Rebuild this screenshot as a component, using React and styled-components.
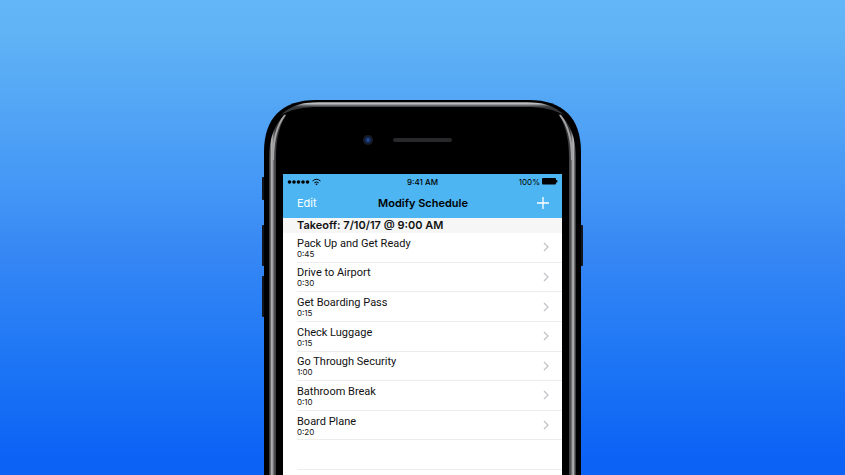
import React from "react";
import styled, { createGlobalStyle } from "styled-components";

const GlobalStyle = createGlobalStyle`
  * { box-sizing: border-box; }
  html { height: 100%; }
  body {
    margin: 0;
    font-family: Inter, "Liberation Sans", sans-serif;
  }
  button { font: inherit; color: inherit; background: none; border: 0; padding: 0; cursor: pointer; }
`;

const Backdrop = styled.main`
  height: 100vh;
  overflow: hidden;
  display: flex;
  justify-content: center;
  align-items: flex-start;
  padding-top: 100px;
  background: linear-gradient(180deg, #63b6f7 0%, #60b3f5 7%, #4194f5 43%, #3a8af4 50%, #2179f5 72%, #0b62f5 97%);
`;

const Phone = styled.section`
  position: relative;
  width: 321px;
  height: 620px;
  padding: 0 21px;
`;

const Shell = styled.svg`
  position: absolute;
  inset: 0;
  width: 100%;
  height: 100%;
`;

const Forehead = styled.div`
  height: 74px;
`;

const Screen = styled.div`
  position: relative;
  min-height: 500px;
  background: #fff;
  color: #111;
`;

const StatusBar = styled.div`
  display: grid;
  grid-template-columns: 1fr auto 1fr;
  align-items: center;
  height: 15px;
  padding: 0 4px;
  background: #4cb5f2;
  color: #000;
  font-size: 8px;
  line-height: 10px;
`;

const Signal = styled.svg`
  width: 34px;
  height: 8px;
`;

const Clock = styled.span`
  font-weight: 500;
`;

const Power = styled.span`
  display: flex;
  justify-content: flex-end;
  align-items: center;
  gap: 1px;
`;

const Battery = styled.svg`
  width: 17px;
  height: 7px;
`;

const NavBar = styled.header`
  display: grid;
  grid-template-columns: 1fr auto 1fr;
  align-items: center;
  height: 29px;
  padding: 0 13px 1px 14px;
  background: #4cb5f2;
`;

const EditButton = styled.button`
  justify-self: start;
  color: #fff;
  font-size: 11px;
  line-height: 16px;
`;

const Title = styled.h1`
  margin: 0;
  color: #000;
  font-size: 11px;
  font-weight: 600;
  line-height: 16px;
`;

const AddButton = styled.button`
  justify-self: end;
  display: flex;
  color: #fff;
`;

const SectionTitle = styled.h2`
  margin: 0;
  padding: 0 14px;
  background: #f6f6f6;
  color: #111;
  font-size: 11px;
  font-weight: 600;
  line-height: 15px;
`;

const Steps = styled.ul`
  display: grid;
  grid-auto-rows: 1fr;
  height: 237px;
  margin: 0;
  padding: 0 0 0 14px;
  list-style: none;
`;

const Step = styled.li`
  display: flex;
  border-bottom: 1px solid #ededee;
`;

const StepButton = styled.button`
  flex: 1;
  display: flex;
  align-items: center;
  justify-content: space-between;
  padding-right: 13px;
  text-align: left;
`;

const StepText = styled.span`
  display: flex;
  flex-direction: column;
`;

const StepName = styled.span`
  font-family: Roboto, "Liberation Sans", sans-serif;
  font-size: 11px;
  line-height: 13px;
`;

const StepTime = styled.span`
  font-size: 8px;
  line-height: 8px;
`;

const steps = [
  ["Pack Up and Get Ready", "0:45"],
  ["Drive to Airport", "0:30"],
  ["Get Boarding Pass", "0:15"],
  ["Check Luggage", "0:15"],
  ["Go Through Security", "1:00"],
  ["Bathroom Break", "0:10"],
  ["Board Plane", "0:20"],
];

function PhoneShell() {
  return (
    <Shell viewBox="0 0 321 620" aria-hidden="true">
      <defs>
        <linearGradient id="side" x1="6" x2="14" y1="0" y2="0" gradientUnits="userSpaceOnUse">
          <stop offset="0" stopColor="#1c1c1e" />
          <stop offset=".25" stopColor="#48484a" />
          <stop offset=".45" stopColor="#b4b4b6" />
          <stop offset=".6" stopColor="#9a9a9c" />
          <stop offset=".75" stopColor="#555557" />
          <stop offset="1" stopColor="#3a3a3c" />
        </linearGradient>
        <linearGradient id="top" x1="0" x2="0" y1="2" y2="7" gradientUnits="userSpaceOnUse">
          <stop offset="0" stopColor="#77787b" />
          <stop offset=".35" stopColor="#c6c7ca" />
          <stop offset=".6" stopColor="#77787b" />
          <stop offset="1" stopColor="#37383b" />
        </linearGradient>
        <radialGradient id="lens">
          <stop offset="0" stopColor="#2f5cae" />
          <stop offset=".4" stopColor="#15306b" />
          <stop offset=".7" stopColor="#111a30" />
          <stop offset="1" stopColor="#1d1d20" />
        </radialGradient>
        <g id="rim">
          <path d="M7 620V58C7 38 13 22 25 13C18 24 14 38 14 58V620Z" fill="url(#side)" />
          <path d="M11 60C11 40 15 25 23 15" fill="none" stroke="#a4a4a6" strokeWidth="2" />
        </g>
      </defs>
      <g fill="#11151d">
        <rect x="0" y="77" width="4" height="23" rx="1" />
        <rect x="0" y="125" width="4" height="41" rx="1" />
        <rect x="0" y="176" width="4" height="41" rx="1" />
        <rect x="317" y="125" width="4" height="41" rx="1" />
      </g>
      <path d="M2 620V52C2 18 20 0 54 0H267C301 0 319 18 319 52V620Z" fill="#000" />
      <path d="M18 16C28 5 42 2 57 2H264C279 2 293 5 303 16C293 9 279 7 264 7H57C42 7 28 9 18 16Z" fill="url(#top)" />
      <use href="#rim" />
      <use href="#rim" transform="translate(321 0) scale(-1 1)" />
      <circle cx="106" cy="40" r="5" fill="url(#lens)" />
      <rect x="131" y="38" width="59" height="4" rx="2" fill="#28282a" />
    </Shell>
  );
}

export default function App() {
  return (
    <>
      <GlobalStyle />
      <Backdrop>
        <Phone aria-label="Phone">
          <PhoneShell />
          <Forehead />
          <Screen>
            <StatusBar>
              <Signal viewBox="0 0 34 8" role="img" aria-label="Signal and Wi-Fi">
                {[2.5, 7, 11.5, 16, 20.5].map((x) => <circle key={x} cx={x} cy="4" r="1.8" />)}
                <path d="M25.5 3Q29.5 -.5 33.5 3M27.3 4.8Q29.5 3 31.7 4.8" fill="none" stroke="#000" />
                <path d="M28.3 6Q29.5 5 30.7 6L29.5 7.3Z" />
              </Signal>
              <Clock>9:41 AM</Clock>
              <Power>
                100%
                <Battery viewBox="0 0 17 7" aria-hidden="true">
                  <rect x="1" width="14" height="6.5" rx="1" />
                  <rect x="15" y="2" width="1.3" height="2.5" rx=".6" />
                </Battery>
              </Power>
            </StatusBar>
            <NavBar>
              <EditButton>Edit</EditButton>
              <Title>Modify Schedule</Title>
              <AddButton aria-label="Add step">
                <svg width="12" height="12" viewBox="0 0 12 12" stroke="currentColor" strokeWidth="1.3">
                  <path d="M6 0V12M0 6H12" />
                </svg>
              </AddButton>
            </NavBar>
            <SectionTitle>Takeoff: 7/10/17 @ 9:00 AM</SectionTitle>
            <Steps>
              {steps.map(([name, time]) => (
                <Step key={name}>
                  <StepButton>
                    <StepText>
                      <StepName>{name}</StepName>
                      <StepTime>{time}</StepTime>
                    </StepText>
                    <svg width="6" height="10" viewBox="0 0 6 10" fill="none" stroke="#c3c3c8" strokeWidth="1.3" aria-hidden="true">
                      <path d="M1 1L5 5L1 9" />
                    </svg>
                  </StepButton>
                </Step>
              ))}
              <Step />
            </Steps>
          </Screen>
        </Phone>
      </Backdrop>
    </>
  );
}
